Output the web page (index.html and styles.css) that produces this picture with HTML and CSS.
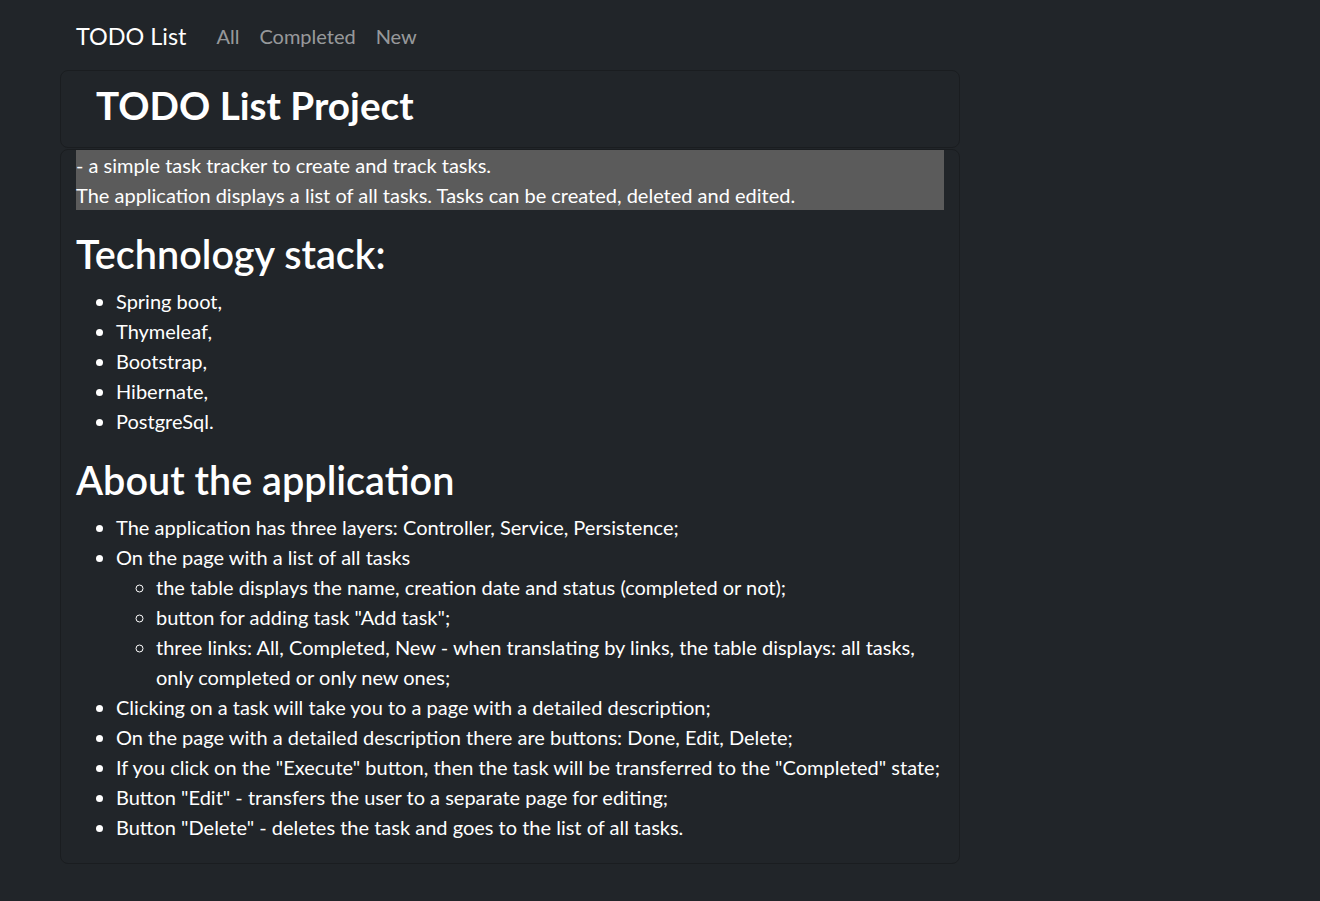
FILE: index.html
```html
<!DOCTYPE html>
<html lang="en">
<head>
<meta charset="utf-8">
<title>TODO List</title>
<link rel="stylesheet" href="styles.css">
</head>
<body>
<div class="page">
  <nav class="navbar">
    <a class="brand" href="#">TODO List</a>
    <ul class="nav">
      <li><a class="nav-link" href="#">All</a></li>
      <li><a class="nav-link" href="#">Completed</a></li>
      <li><a class="nav-link" href="#">New</a></li>
    </ul>
  </nav>
  <div class="card hero">
    <h1 class="hero-title">TODO List Project</h1>
  </div>
  <div class="card content">
    <p class="lead">- a simple task tracker to create and track tasks.<br>The application displays a list of all tasks. Tasks can be created, deleted and edited.</p>
    <h2>Technology stack:</h2>
    <ul class="list">
      <li>Spring boot,</li>
      <li>Thymeleaf,</li>
      <li>Bootstrap,</li>
      <li>Hibernate,</li>
      <li>PostgreSql.</li>
    </ul>
    <h2>About the application</h2>
    <ul class="list last">
      <li>The application has three layers: Controller, Service, Persistence;</li>
      <li>On the page with a list of all tasks
        <ul class="sublist">
          <li>the table displays the name, creation date and status (completed or not);</li>
          <li>button for adding task "Add task";</li>
          <li>three links: All, Completed, New - when translating by links, the table displays: all tasks, only completed or only new ones;</li>
        </ul>
      </li>
      <li>Clicking on a task will take you to a page with a detailed description;</li>
      <li>On the page with a detailed description there are buttons: Done, Edit, Delete;</li>
      <li>If you click on the "Execute" button, then the task will be transferred to the "Completed" state;</li>
      <li>Button "Edit" - transfers the user to a separate page for editing;</li>
      <li>Button "Delete" - deletes the task and goes to the list of all tasks.</li>
    </ul>
  </div>
</div>
</body>
</html>
```
FILE: styles.css
```css
* { box-sizing: border-box; }
html, body { margin: 0; padding: 0; }
body {
  background: #212529;
  color: #ffffff;
  font-family: "Lato", "Noto Sans", sans-serif;
  font-size: 20px;
  line-height: 30px;
}
.page {
  width: 900px;
  margin-left: 60px;
}
.navbar {
  display: flex;
  align-items: center;
  height: 70px;
  padding: 1px 0 0 16px;
}
.brand {
  color: #ffffff;
  text-decoration: none;
  font-size: 23.4px;
  line-height: 30px;
  margin-right: 20px;
}
.nav {
  display: flex;
  list-style: none;
  margin: 0;
  padding: 0;
}
.nav-link {
  display: block;
  padding: 0 10px;
  color: rgba(255, 255, 255, 0.55);
  text-decoration: none;
  line-height: 30px;
}
.card {
  border: 1px solid #1a1d20;
  border-radius: 8px;
}
.hero {
  height: 78px;
  padding: 10px 35px;
  margin-bottom: 1px;
}
.hero-title {
  margin: 0;
  font-size: 38.7px;
  line-height: 48px;
  font-weight: 700;
}
.content {
  padding: 0 15px;
}
.lead {
  margin: 0 0 20px;
  background: #5b5b5b;
}
h2 {
  margin: 0 0 8px;
  font-size: 39.6px;
  line-height: 48px;
  font-weight: 600;
}
.list {
  margin: 0 0 20px;
  padding-left: 40px;
}
.list.last {
  margin-bottom: 21px;
}
.sublist {
  margin: 0;
  padding-left: 40px;
  list-style: circle;
}
```
